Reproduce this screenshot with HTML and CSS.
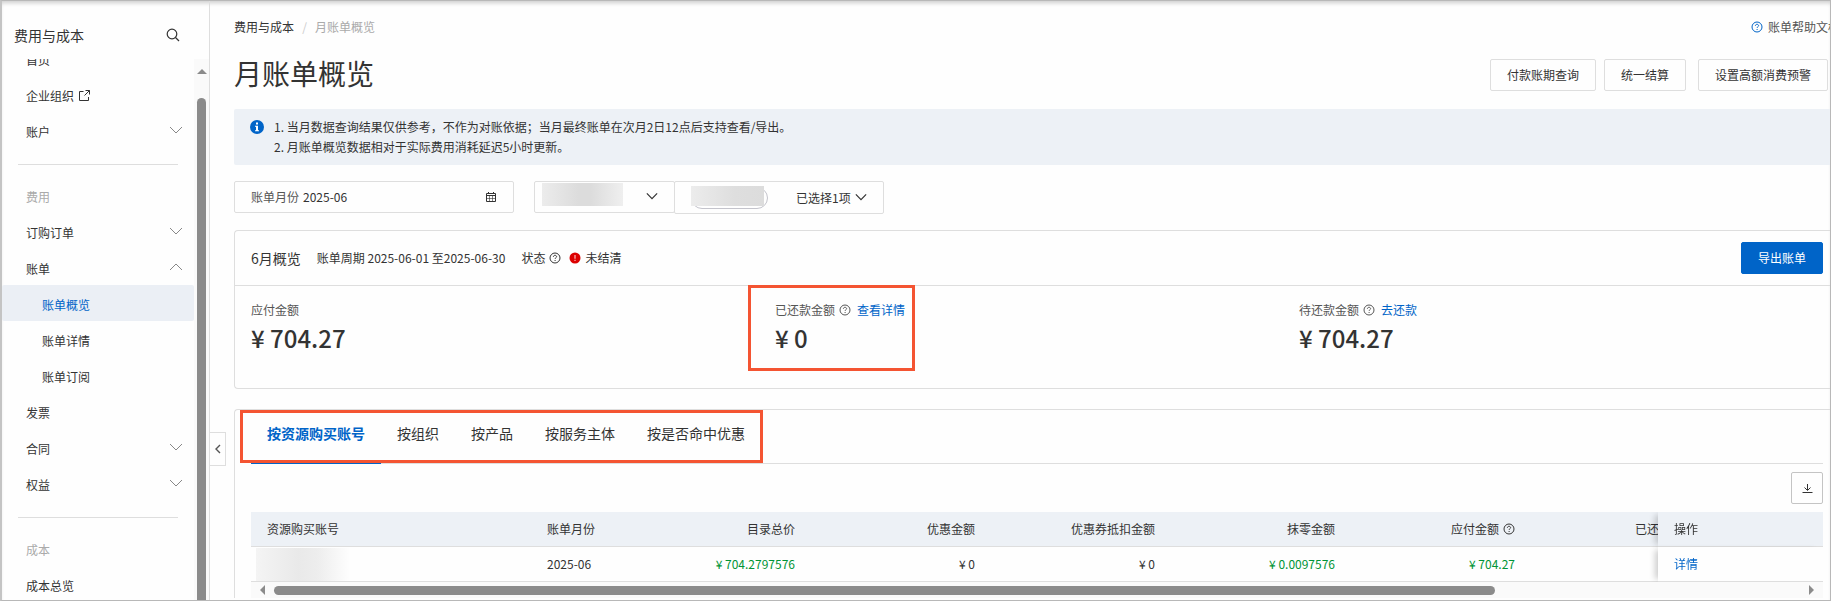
FILE: index.html
```html
<!DOCTYPE html>
<html lang="zh-CN">
<head>
<meta charset="utf-8">
<title>月账单概览</title>
<link rel="stylesheet" href="styles.css">
</head>
<body>
<svg class="defs" aria-hidden="true">
  <symbol id="chev" viewBox="0 0 14 8"><path d="M1 1l6 6 6-6" fill="none" stroke="currentColor"/></symbol>
  <symbol id="help" viewBox="0 0 12 12"><circle cx="6" cy="6" r="5" fill="none" stroke="currentColor"/><path d="M4.4 4.9c0-1 .7-1.6 1.6-1.6s1.6.6 1.6 1.4c0 1-1.5 1.1-1.5 2.2M6.1 8v1" fill="none" stroke="currentColor"/></symbol>
</svg>
<div class="app">
  <aside class="sidebar">
    <div class="side-head">
      <span>费用与成本</span>
      <button class="icon-btn" aria-label="搜索"><svg width="14" height="14" viewBox="0 0 14 14"><circle cx="6" cy="6" r="4.8" fill="none" stroke="currentColor" stroke-width="1.2"/><path d="M9.5 9.5l3.5 3.5" stroke="currentColor" stroke-width="1.3"/></svg></button>
    </div>
    <div class="side-body">
      <nav class="nav">
        <a class="item first" href="#">首页</a>
        <a class="item" href="#">企业组织<svg class="ext" width="11" height="11" viewBox="0 0 11 11"><path d="M4.500 1.500h-4v9h9V7M6.500 .5h4v4M10.500 .5L5.500 5.500" fill="none" stroke="currentColor"/></svg></a>
        <a class="item" href="#">账户<svg class="chev"><use href="#chev"/></svg></a>
        <hr>
        <div class="item group">费用</div>
        <a class="item" href="#">订购订单<svg class="chev"><use href="#chev"/></svg></a>
        <a class="item" href="#">账单<svg class="chev up"><use href="#chev"/></svg></a>
        <a class="item sub active" href="#">账单概览</a>
        <a class="item sub" href="#">账单详情</a>
        <a class="item sub" href="#">账单订阅</a>
        <a class="item" href="#">发票</a>
        <a class="item" href="#">合同<svg class="chev"><use href="#chev"/></svg></a>
        <a class="item" href="#">权益<svg class="chev"><use href="#chev"/></svg></a>
        <hr>
        <div class="item group">成本</div>
        <a class="item" href="#">成本总览</a>
      </nav>
      <div class="vbar"><i class="arrow-up"></i><i class="vthumb"></i></div>
    </div>
  </aside>

  <main class="main">
    <button class="collapse" aria-label="收起菜单"><svg width="6" height="10" viewBox="0 0 6 10"><path d="M5 1L1 5l4 4" fill="none" stroke="currentColor" stroke-width="1.4"/></svg></button>
    <div class="crumbs">
      <div class="trail"><a href="#">费用与成本</a><span class="slash">/</span><span class="here">月账单概览</span></div>
      <a class="doc" href="#"><svg class="q"><use href="#help"/></svg><span>账单帮助文档</span></a>
    </div>
    <header class="head">
      <h1>月账单概览</h1>
      <div class="actions">
        <button class="btn">付款账期查询</button>
        <button class="btn">统一结算</button>
        <button class="btn wide-gap">设置高额消费预警</button>
      </div>
    </header>
    <section class="notice">
      <svg width="14" height="14" viewBox="0 0 14 14"><circle cx="7" cy="7" r="7" fill="#0064c8"/><path d="M6 2.500h2v2H6zM5 5.700h3v4.600h1v1H5v-1h1V6.700H5z" fill="#fff"/></svg>
      <div>
        <p>1. 当月数据查询结果仅供参考，不作为对账依据；当月最终账单在次月2日12点后支持查看/导出。</p>
        <p>2. 月账单概览数据相对于实际费用消耗延迟5小时更新。</p>
      </div>
    </section>
    <form class="filters">
      <div class="field month">
        <label for="month">账单月份</label>
        <input id="month" type="text" value="2025-06">
        <svg width="10" height="10" viewBox="0 0 10 10"><path d="M.5 1.500h9v8h-9zM.5 3.500h9M2.500 0v2M7.500 0v2" fill="none" stroke="currentColor"/><path d="M3.500 4v5M6.500 4v5M1 6.500h8" fill="none" stroke="currentColor" stroke-width=".6"/></svg>
      </div>
      <div class="pair">
        <div class="field acct">
          <span class="mask"></span>
          <select aria-label="账号类型"><option></option></select>
          <svg class="caret"><use href="#chev"/></svg>
        </div>
        <div class="field picked">
          <span class="chip"><span class="mask"></span></span>
          <select aria-label="已选账号"><option>已选择1项</option></select>
          <svg class="caret"><use href="#chev"/></svg>
        </div>
      </div>
    </form>

    <section class="card summary">
      <div class="sum-head">
        <h2>6月概览</h2>
        <span class="period">账单周期 2025-06-01 至2025-06-30</span>
        <span class="state">状态<svg class="q"><use href="#help"/></svg></span>
        <span class="unpaid"><svg width="12" height="12" viewBox="0 0 12 12"><circle cx="6" cy="6" r="5.500" fill="#dc0000"/><path d="M6 3v3.800M6 7.800V9" stroke="#fbb" stroke-width="1.200"/></svg>未结清</span>
        <button class="btn primary">导出账单</button>
      </div>
      <div class="sums">
        <div class="sum"><div class="label">应付金额</div><strong>¥ 704.27</strong></div>
        <div class="sum marked"><div class="label">已还款金额<svg class="q"><use href="#help"/></svg><a href="#">查看详情</a></div><strong>¥ 0</strong></div>
        <div class="sum"><div class="label">待还款金额<svg class="q"><use href="#help"/></svg><a href="#">去还款</a></div><strong>¥ 704.27</strong></div>
      </div>
    </section>

    <section class="card detail">
      <div class="tabs">
        <div class="tablist" role="tablist">
          <button class="tab on" role="tab" aria-selected="true">按资源购买账号</button>
          <button class="tab" role="tab">按组织</button>
          <button class="tab" role="tab">按产品</button>
          <button class="tab" role="tab">按服务主体</button>
          <button class="tab" role="tab">按是否命中优惠</button>
        </div>
      </div>
      <div class="tools"><button class="download" aria-label="下载"><svg width="11" height="11" viewBox="0 0 11 11"><path d="M5.500 1v6M2.500 4.500l3 3 3-3M.5 9.500h10" fill="none" stroke="currentColor"/></svg></button></div>
      <div class="scroller">
        <table>
          <colgroup><col class="c-acct"><col class="c-month"><col class="c-num"><col class="c-num"><col class="c-num"><col class="c-num"><col class="c-num"><col class="c-num"><col class="c-op"></colgroup>
          <thead><tr><th>资源购买账号</th><th>账单月份</th><th class="n">目录总价</th><th class="n">优惠金额</th><th class="n">优惠券抵扣金额</th><th class="n">抹零金额</th><th class="n">应付金额<svg class="q"><use href="#help"/></svg></th><th class="n">已还款金额</th><th class="op">操作</th></tr></thead>
          <tbody><tr><td class="masked"><span class="mask"></span></td><td>2025-06</td><td class="n g">¥ 704.2797576</td><td class="n">¥ 0</td><td class="n">¥ 0</td><td class="n g">¥ 0.0097576</td><td class="n g">¥ 704.27</td><td class="n"></td><td class="op"><a href="#">详情</a></td></tr></tbody>
        </table>
      </div>
      <div class="hbar"><i class="arrow-left"></i><span class="track"><i class="hthumb"></i></span><i class="arrow-right"></i></div>
    </section>
  </main>
</div>
</body>
</html>
```
FILE: styles.css
```css
*, *::before, *::after { box-sizing: border-box; }
body {
  margin: 0;
  font: 12px/20px "Noto Sans CJK SC", "Noto Sans", sans-serif;
  color: #333;
  background: #fefefe;
}
a { color: #0064c8; text-decoration: none; }
button, input, select { font: inherit; color: inherit; }
h1, h2, p { margin: 0; font-weight: 400; }
svg { flex: none; }
.defs { position: absolute; width: 0; height: 0; }

.app {
  display: flex;
  height: 100vh;
  overflow: hidden;
  border: 1px solid #b8b8b8;
  border-left: 2px solid #c4c4c4;
  box-shadow: inset 0 4px 4px -2px #ccc;
}

/* Sidebar */
.sidebar {
  flex: none;
  display: flex;
  flex-direction: column;
  width: 208px;
  border-right: 1px solid #dedede;
}
.side-head {
  flex: none;
  display: flex;
  justify-content: space-between;
  align-items: center;
  height: 58px;
  padding: 10px 29px 0 12px;
  font-size: 14px;
}
.icon-btn { display: flex; padding: 0; border: 0; background: none; }
.side-body { flex: 1; display: flex; min-height: 0; overflow: hidden; }
.nav { flex: none; width: 192px; }
.item {
  display: flex;
  align-items: center;
  height: 36px;
  padding: 3px 11px 0 24px;
  color: #333;
}
.item.first { margin-top: -19px; }
.item.group { color: #aaa; }
.item.sub { padding-left: 40px; }
.item.active { background: #ebeff5; color: #0064c8; border-radius: 2px; }
.nav hr { margin: 16px 16px 12px; border: 0; border-top: 1px solid #dedede; }
.ext { margin-left: 5px; }
.chev { width: 14px; height: 8px; margin: 0 0 4px auto; color: #888; }
.up { transform: rotate(180deg); }
.vbar {
  flex: 1;
  display: flex;
  flex-direction: column;
  align-items: center;
  padding-top: 10px;
  background: #fafafa;
}
.arrow-up { border: 5px solid transparent; border-top: 0; border-bottom-color: #8b8b8b; }
.vthumb { flex: 1; width: 9px; margin-top: 24px; border-radius: 5px 5px 0 0; background: #8b8b8b; }

/* Main */
.main { position: relative; flex: 1; min-width: 0; padding: 16px 0 0 24px; }
.collapse {
  position: absolute;
  top: 431px;
  left: 0;
  display: flex;
  align-items: center;
  justify-content: center;
  width: 16px;
  height: 34px;
  padding: 0;
  border: 1px solid #dedede;
  border-left: 0;
  background: #fefefe;
  color: #555;
}
.crumbs { display: flex; justify-content: space-between; height: 20px; overflow: hidden; }
.trail { display: flex; }
.trail a { color: #333; }
.slash { width: 21px; text-align: center; color: #ccc; }
.here { color: #aaa; }
.doc { display: flex; align-items: center; gap: 5px; width: 79px; color: #555; white-space: nowrap; }
.doc .q { color: #0064c8; }
.q { width: 12px; height: 12px; }
.head { display: flex; justify-content: space-between; align-items: center; height: 72px; padding: 4px 2px 0 0; }
h1 { font-size: 28px; line-height: 40px; margin-bottom: 4px; }
.actions { display: flex; gap: 8px; }
.btn {
  height: 32px;
  padding: 0 16px;
  border: 1px solid #dedede;
  border-radius: 2px;
  background: #fefefe;
  white-space: nowrap;
}
.wide-gap { margin-left: 4px; }
.primary { margin-left: auto; border-color: #0064c8; background: #0064c8; color: #fff; }
.notice {
  display: flex;
  gap: 10px;
  padding: 8px 16px;
  border-radius: 2px 0 0 2px;
  background: #edf1f6;
}
.notice svg { margin-top: 3px; }

.filters { display: flex; gap: 20px; align-items: flex-start; height: 33px; margin: 16px 0; }
.field {
  display: flex;
  align-items: center;
  height: 32px;
  border: 1px solid #dedede;
  border-radius: 2px;
}
.month { width: 280px; padding: 0 17px 0 16px; gap: 4px; }
.month label { color: #555; white-space: nowrap; }
.month input { flex: 1; min-width: 0; padding: 0; border: 0; outline: 0; background: none; }
.pair { display: flex; }
.field select { appearance: none; border: 0; padding: 0; background: none; }
.caret { width: 12px; height: 8px; margin-bottom: 2px; color: #333; stroke-width: 1.4px; }
.acct { width: 141px; padding: 0 16px 0 7px; }
.acct .mask { width: 81px; height: 23px; margin-bottom: 6px; background: linear-gradient(90deg, #ececec, #dcdcdc 45%, #dcdcdc 60%, #efefef); }
.acct select { flex: 1; min-width: 0; }
.picked { width: 210px; height: 33px; margin-left: -1px; padding: 0 16px; gap: 4px; }
.picked select { margin-left: auto; width: 55px; }
.chip { height: 22px; width: 77px; border: 1px solid #c4c4cc; border-radius: 11px; }
.chip .mask { display: block; width: 73px; height: 20px; margin: -2px 0 0 -1px; background: linear-gradient(90deg, #ececec, #dedede 60%, #dcdcdc); }

/* Cards */
.card { border: 1px solid #dedede; border-right: 0; border-radius: 4px 0 0 0; padding: 0 7px 0 16px; }
.summary { border-radius: 4px 0 0 4px; padding: 0; }
.sum-head { display: flex; align-items: center; height: 55px; padding: 0 7px 0 16px; border-bottom: 1px solid #dedede; }
.sum-head h2 { font-size: 14px; }
.period, .state { margin-left: 16px; }
.state, .unpaid { display: flex; align-items: center; gap: 4px; }
.unpaid { margin-left: 8px; }
.sums { display: grid; grid-template-columns: repeat(3, 1fr); height: 102px; padding: 14px 7px 0 16px; }
.sum { position: relative; }
.label { display: flex; align-items: center; gap: 4px; color: #555; }
.label a { margin-left: 2px; }
.sum strong { display: block; font-size: 24px; line-height: 36px; font-weight: 500; }
.marked::after {
  content: "";
  position: absolute;
  top: -15px;
  left: -27px;
  width: 167px;
  height: 86px;
  border: 3px solid #f45432;
  pointer-events: none;
}

.detail { margin-top: 20px; border-bottom: 0; }
.tabs { border-bottom: 1px solid #dedede; }
.tablist { position: relative; display: flex; width: max-content; margin-bottom: -1px; }
.tablist::after {
  content: "";
  position: absolute;
  top: 0;
  left: -11px;
  right: -2px;
  height: 53px;
  border: 3px solid #f45432;
  pointer-events: none;
}
.tab { height: 54px; padding: 0 16px 8px; border: 0; background: none; font-size: 14px; }
.tab.on { border-bottom: 2px solid #0064c8; padding-bottom: 6px; color: #0064c8; font-weight: 700; }
.tools { display: flex; justify-content: flex-end; padding: 8px 0; }
.download {
  display: flex;
  align-items: center;
  justify-content: center;
  width: 32px;
  height: 32px;
  padding: 0;
  border: 1px solid #c4c4c4;
  border-radius: 2px;
  background: #fefefe;
}
.scroller { overflow: hidden; }
table { width: 1625px; table-layout: fixed; border-collapse: separate; border-spacing: 0; }
.c-acct { width: 280px; }
.c-month { width: 100px; }
.c-num { width: 180px; }
.c-op { width: 165px; }
th, td { height: 35px; padding: 0 16px; border-bottom: 1px solid #dedede; text-align: left; font-weight: 400; white-space: nowrap; }
th { background: #edf1f6; }
.n { text-align: right; }
.g { color: #009436; }
th .q { margin-left: 4px; vertical-align: -1px; }
.op { position: sticky; right: 0; background: #fefefe; box-shadow: -6px 0 6px -3px #00000030; }
th.op { background: #edf1f6; }
.masked { padding: 0 5px; }
.masked .mask { display: block; width: 94px; height: 33px; background: linear-gradient(90deg, #f4f4f4, #e9e9e9 45%, #ededed 65%, #fefefe); }
.hbar { display: flex; align-items: center; gap: 9px; height: 16px; padding: 0 9px; background: #fafafa; }
.arrow-left, .arrow-right { border: 5px solid transparent; }
.arrow-left { border-left: 0; border-right-color: #8b8b8b; }
.arrow-right { border-right: 0; border-left-color: #8b8b8b; }
.track { flex: 1; display: flex; }
.hthumb { width: 80%; height: 9px; border-radius: 5px; background: #8b8b8b; }
```
